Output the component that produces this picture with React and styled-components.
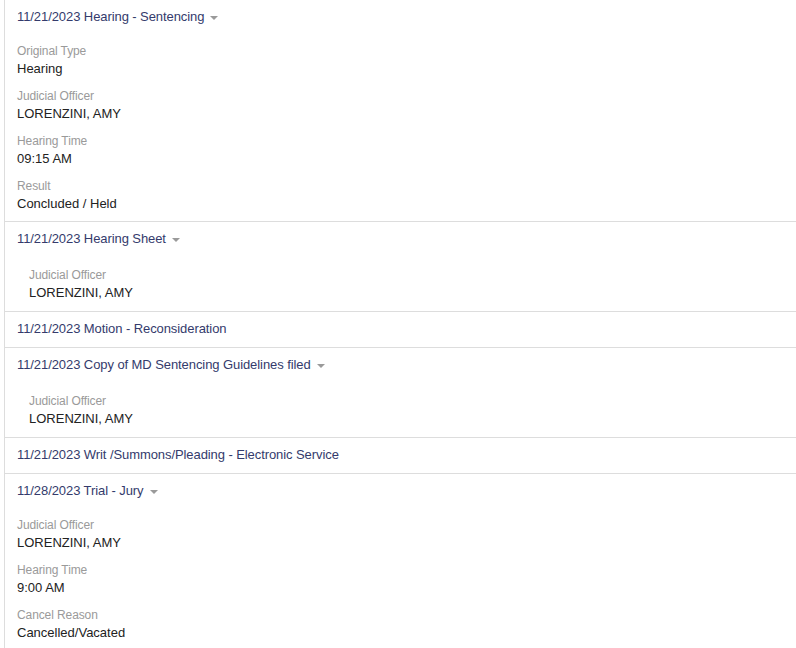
import React from "react";
import styled, { createGlobalStyle } from "styled-components";

const Global = createGlobalStyle`
  html, body { margin: 0; padding: 0; background: #fff; }
  body { font-family: "Liberation Sans", Arial, sans-serif; }
`;

const List = styled.div`
  margin-left: 4px;
  border-left: 1px solid #dddddd;
`;

const Entry = styled.section`
  border-bottom: 1px solid #dddddd;
`;

const Title = styled.div`
  display: flex;
  align-items: center;
  padding: 7px 12px 8px;
  font-size: 13px;
  line-height: 20px;
  letter-spacing: -0.08px;
  color: #343b6c;
`;

const Caret = styled.span`
  display: inline-block;
  width: 0;
  height: 0;
  margin-left: 6px;
  margin-top: 1px;
  border-left: 4px solid transparent;
  border-right: 4px solid transparent;
  border-top: 4px solid #9a9a9a;
`;

const Details = styled.div`
  display: flex;
  flex-direction: column;
  gap: 9px;
  padding: ${(p) => (p.$indent ? "10px 12px 8px 24px" : "8px 12px 7px")};
`;

const Field = styled.div`
  display: flex;
  flex-direction: column;
`;

const Label = styled.div`
  font-size: 12px;
  line-height: 16px;
  letter-spacing: -0.1px;
  color: #9a9a9a;
`;

const Value = styled.div`
  font-size: 13px;
  line-height: 20px;
  color: #222222;
`;

const entries = [
  {
    title: "11/21/2023 Hearing - Sentencing",
    fields: [
      ["Original Type", "Hearing"],
      ["Judicial Officer", "LORENZINI, AMY"],
      ["Hearing Time", "09:15 AM"],
      ["Result", "Concluded / Held"],
    ],
  },
  {
    title: "11/21/2023 Hearing Sheet",
    indent: true,
    fields: [["Judicial Officer", "LORENZINI, AMY"]],
  },
  { title: "11/21/2023 Motion - Reconsideration" },
  {
    title: "11/21/2023 Copy of MD Sentencing Guidelines filed",
    indent: true,
    fields: [["Judicial Officer", "LORENZINI, AMY"]],
  },
  { title: "11/21/2023 Writ /Summons/Pleading - Electronic Service" },
  {
    title: "11/28/2023 Trial - Jury",
    fields: [
      ["Judicial Officer", "LORENZINI, AMY"],
      ["Hearing Time", "9:00 AM"],
      ["Cancel Reason", "Cancelled/Vacated"],
    ],
  },
];

export default function App() {
  return (
    <>
      <Global />
      <List>
        {entries.map((e, i) => (
          <Entry key={i}>
            <Title>
              {e.title}
              {e.fields && <Caret />}
            </Title>
            {e.fields && (
              <Details $indent={e.indent}>
                {e.fields.map(([l, v]) => (
                  <Field key={l}>
                    <Label>{l}</Label>
                    <Value>{v}</Value>
                  </Field>
                ))}
              </Details>
            )}
          </Entry>
        ))}
      </List>
    </>
  );
}
